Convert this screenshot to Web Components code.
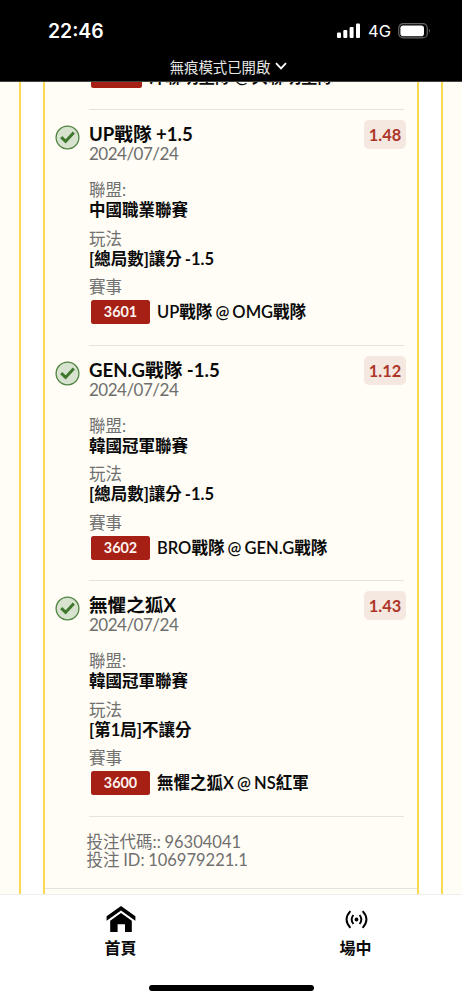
<!DOCTYPE html>
<html lang="zh-Hant">
<head>
<meta charset="utf-8">
<meta name="viewport" content="width=device-width, initial-scale=1">
<title>注單</title>
<style>
    html, body {
        margin: 0;
        height: 100%;
    }
    body {
        font-family: Lato, "Noto Sans CJK TC", sans-serif;
        overflow: hidden;
    }
</style>
</head>
<body>
<bet-app>
    <status-bar slot="top" time="22:46" network="4G">無痕模式已開啟</status-bar>
    <bet-slip>
        <match-row class="cut" small>洋聯明星隊 @ 央聯明星隊</match-row>
        <bet-leg odds="1.48" date="2024/07/24" code="3601">
            <span slot="pick">UP戰隊 +1.5</span>
            <span slot="league">中國職業聯賽</span>
            <span slot="market">[總局數]讓分 -1.5</span>
            UP戰隊 @ OMG戰隊
        </bet-leg>
        <bet-leg odds="1.12" date="2024/07/24" code="3602">
            <span slot="pick">GEN.G戰隊 -1.5</span>
            <span slot="league">韓國冠軍聯賽</span>
            <span slot="market">[總局數]讓分 -1.5</span>
            BRO戰隊 @ GEN.G戰隊
        </bet-leg>
        <bet-leg odds="1.43" date="2024/07/24" code="3600">
            <span slot="pick">無懼之狐X</span>
            <span slot="league">韓國冠軍聯賽</span>
            <span slot="market">[第1局]不讓分</span>
            無懼之狐X @ NS紅軍
        </bet-leg>
        <div slot="meta">投注代碼:: 96304041</div>
        <div slot="meta">投注 ID: 106979221.1</div>
    </bet-slip>
    <tab-bar slot="bottom">
        <tab-item>
            <svg slot="icon" width="30" height="28" viewBox="0 0 30 28">
                <path d="M15 1 29.4 11.3V15.8L15 5.5.6 15.8V11.3Z"/>
                <path d="M15 8 25.8 15.7V27H19V19.3H11.6V27H4.2V15.7Z"/>
            </svg>
            首頁
        </tab-item>
        <tab-item>
            <svg slot="icon" width="24" height="28" viewBox="0 0 24 28" fill="none" stroke="#000" stroke-width="1.9">
                <circle cx="12.5" cy="14.5" r="1.9" fill="#000" stroke="none"/>
                <path d="M9.4 10Q5.9 14.5 9.4 19M15.6 10Q19.1 14.5 15.6 19M6.4 6.2Q-1.3 14.5 6.4 22.8M18.6 6.2Q26.3 14.5 18.6 22.8"/>
            </svg>
            場中
        </tab-item>
    </tab-bar>
</bet-app>

<script>
    function define(name, html, setup) {
        const template = document.createElement("template");
        template.innerHTML = html;

        customElements.define(name, class extends HTMLElement {
            constructor() {
                super();
                this.attachShadow({mode: "open"});
                this.shadowRoot.appendChild(template.content.cloneNode(true));
                if (setup) {
                    setup(this, this.shadowRoot);
                }
            }
        });
    }

    define("bet-app", `
        <style>
            :host {
                display: flex;
                flex-direction: column;
                height: 1000px;
                background: #fff;
            }
            main {
                flex: 1;
                min-height: 0;
                display: grid;
                grid-template-columns: 21px 376px 21px;
                justify-content: space-between;
                overflow: hidden;
            }
            .side {
                background: #fffdf5;
                border: 0 solid #fad952;
            }
            .left {
                border-right-width: 2px;
            }
            .right {
                border-left-width: 2px;
            }
        </style>
        <slot name="top"></slot>
        <main>
            <div class="side left"></div>
            <slot></slot>
            <div class="side right"></div>
        </main>
        <slot name="bottom"></slot>
    `);

    define("status-bar", `
        <style>
            :host {
                display: flex;
                flex-direction: column;
                height: 82px;
                flex: none;
                box-sizing: border-box;
                background: #000;
                color: #fff;
                border-bottom: 1px solid #45433f;
            }
            .system {
                display: flex;
                align-items: center;
                height: 20px;
                padding: 21px 31px 0 48px;
                font-family: Inter, sans-serif;
            }
            .time {
                flex: 1;
                font-size: 19.4px;
                font-weight: 600;
            }
            .network {
                margin: 0 7px 0 7px;
                font-size: 16.5px;
            }
            .mode {
                display: flex;
                justify-content: center;
                align-items: center;
                gap: 5px;
                margin-top: 16px;
                padding-right: 5px;
                height: 18px;
                font-size: 14.4px;
                color: #e8e8e8;
            }
        </style>
        <div class="system">
            <span class="time"></span>
            <svg width="24" height="16" viewBox="0 0 24 16" fill="#fff">
                <rect x="0" y="9.5" width="4" height="5.5" rx="1"/>
                <rect x="6.3" y="7" width="4" height="8" rx="1"/>
                <rect x="12.6" y="4" width="4" height="11" rx="1"/>
                <rect x="19" y="0.4" width="4" height="14.6" rx="1"/>
            </svg>
            <span class="network"></span>
            <svg width="33" height="16" viewBox="0 0 33 16">
                <rect x="0.7" y="0.7" width="28.6" height="14.2" rx="4.5" fill="none" stroke="#666" stroke-width="1.2"/>
                <rect x="2.4" y="2.4" width="23.6" height="10.8" rx="2.8" fill="#fff"/>
                <path d="M31 5.5q1.7 2.3 0 4.6z" fill="#777"/>
            </svg>
        </div>
        <div class="mode">
            <slot></slot>
            <svg width="12" height="8" viewBox="0 0 12 8" fill="none" stroke="#fff" stroke-width="1.8">
                <path d="M1 1.2 6 6.4 11 1.2"/>
            </svg>
        </div>
    `, (host, root) => {
        root.querySelector(".time").textContent = host.getAttribute("time");
        root.querySelector(".network").textContent = host.getAttribute("network");
    });

    define("bet-slip", `
        <style>
            :host {
                display: block;
                box-sizing: border-box;
                border: 2px solid #fad952;
                border-width: 0 2px;
                background: #fffdf5;
            }
            .legs {
                padding: 0 13px 0 44px;
            }
            ::slotted(.cut) {
                margin: -18.3px 0 21.5px;
            }
            .meta {
                box-sizing: border-box;
                height: 71.3px;
                margin-left: -2.4px;
                padding-top: 16.5px;
                font-size: 16.5px;
                line-height: 18px;
                word-spacing: -0.6px;
                color: #707070;
            }
            hr {
                margin: 0;
                border: 0;
                border-top: 1px solid #e6e3dd;
            }
        </style>
        <div class="legs">
            <slot></slot>
            <hr>
            <div class="meta"><slot name="meta"></slot></div>
        </div>
        <hr>
    `);

    define("bet-leg", `
        <style>
            :host {
                display: block;
                box-sizing: border-box;
                height: 235.5px;
                border-top: 1px solid #e6e3dd;
                padding-top: 10px;
            }
            header {
                display: flex;
                align-items: flex-start;
                height: 60px;
                margin: 0 -2px 0 -34px;
            }
            .check {
                margin: 5px 9px 0 0;
            }
            .head {
                flex: 1;
                padding-top: 4px;
                line-height: 20px;
            }
            .pick {
                height: 20px;
                font-size: 18.6px;
                font-weight: bold;
                color: #0a0a0a;
            }
            .date {
                font-size: 17px;
                letter-spacing: -0.5px;
                color: #6e6e6e;
            }
            .odds {
                width: 42px;
                height: 29px;
                border-radius: 5px;
                background: #f5e8e0;
                color: #ae3628;
                font-size: 16.4px;
                font-weight: bold;
                line-height: 30px;
                text-align: center;
            }
            dl {
                margin: 0;
                font-size: 16.5px;
                line-height: 20px;
                word-spacing: -1px;
            }
            dt, dd {
                height: 20px;
                margin: 0;
            }
            dt {
                color: #707070;
            }
            dd {
                margin-bottom: 8.5px;
                font-weight: bold;
                color: #0a0a0a;
            }
            match-row {
                margin-top: 3.2px;
            }
        </style>
        <header>
            <svg class="check" width="25" height="25" viewBox="0 0 25 25">
                <circle cx="12.5" cy="12.5" r="11.4" fill="#d8e3cf" stroke="#4f8440" stroke-width="1.3"/>
                <path d="M6.2 12.2 10.6 16.4 18.8 7.6" fill="none" stroke="#3f772d" stroke-width="3"/>
            </svg>
            <div class="head">
                <div class="pick"><slot name="pick"></slot></div>
                <div class="date"></div>
            </div>
            <div class="odds"></div>
        </header>
        <dl>
            <dt>聯盟:</dt>
            <dd><slot name="league"></slot></dd>
            <dt>玩法</dt>
            <dd><slot name="market"></slot></dd>
            <dt>賽事</dt>
        </dl>
        <match-row><slot></slot></match-row>
    `, (host, root) => {
        root.querySelector(".date").textContent = host.getAttribute("date");
        root.querySelector(".odds").textContent = host.getAttribute("odds");
        root.querySelector("match-row").setAttribute("code", host.getAttribute("code"));
    });

    define("match-row", `
        <style>
            :host {
                display: flex;
                align-items: center;
                gap: 7px;
                height: 24px;
                padding-left: 2px;
                font-size: 16.5px;
                font-weight: 600;
                word-spacing: -1px;
                color: #0a0a0a;
                white-space: nowrap;
            }
            .code {
                width: 59px;
                height: 24px;
                flex: none;
                border-radius: 2.5px;
                background: #a62016;
                color: #fdf3ee;
                font-size: 14.4px;
                font-weight: bold;
                line-height: 24px;
                text-align: center;
            }
            :host([small]) .code {
                width: 51px;
            }
            :host([small]) .match {
                padding-top: 2px;
            }
            .match {
                line-height: 24px;
            }
        </style>
        <div class="code"></div>
        <div class="match"><slot></slot></div>
    `);

    // the code arrives as an attribute from bet-leg after construction
    document.querySelectorAll("bet-leg").forEach(leg => {
        const row = leg.shadowRoot.querySelector("match-row");
        row.shadowRoot.querySelector(".code").textContent = row.getAttribute("code");
    });

    define("tab-bar", `
        <style>
            :host {
                display: flex;
                flex-direction: column;
                align-items: center;
                flex: none;
                height: 106px;
                box-sizing: border-box;
                border-top: 1px solid #efeeed;
                background: #fff;
            }
            nav {
                display: flex;
                width: 470px;
                height: 89.5px;
                margin-left: 14px;
            }
            .home {
                width: 165px;
                height: 6px;
                border-radius: 3px;
                background: #000;
            }
        </style>
        <nav><slot></slot></nav>
        <div class="home"></div>
    `);

    define("tab-item", `
        <style>
            :host {
                display: flex;
                flex-direction: column;
                align-items: center;
                flex: 1;
                padding-top: 10px;
                font-size: 16px;
                font-weight: bold;
                line-height: 22px;
                color: #0a0a0a;
            }
            .label {
                margin-top: 4px;
            }
        </style>
        <slot name="icon"></slot>
        <div class="label"><slot></slot></div>
    `);
</script>
</body>
</html>
